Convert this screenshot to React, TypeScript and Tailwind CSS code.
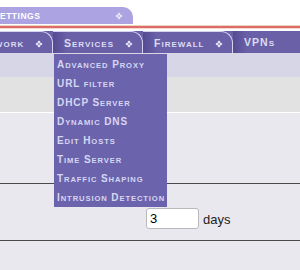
// IPCop-style nav with Services dropdown open
const Diamond = () => (
  <svg width="8" height="8" viewBox="0 0 8 8" className="shrink-0">
    <path
      d="M4 0.5L5.6 2.1 4 3.7 2.4 2.1Z M2.1 2.4L3.7 4 2.1 5.6 0.5 4Z M5.9 2.4L7.5 4 5.9 5.6 4.3 4Z M4 4.3L5.6 5.9 4 7.5 2.4 5.9Z"
      fill="#ecebf8"
    />
  </svg>
);

// hand-made small caps: capitals stay big, the rest drops a size
const SmallCaps = ({ text, small }: { text: string; small: string }) => (
  <span className="whitespace-nowrap">
    {text.split("").map((c, i) =>
      c === c.toUpperCase() ? (
        <span key={i}>{c}</span>
      ) : (
        <span key={i} className={small}>
          {c.toUpperCase()}
        </span>
      )
    )}
  </span>
);

const tabs = ["Network", "Services", "Firewall"];

const menu = [
  "Advanced Proxy",
  "URL filter",
  "DHCP Server",
  "Dynamic DNS",
  "Edit Hosts",
  "Time Server",
  "Traffic Shaping",
  "Intrusion Detection",
];

export default function App() {
  return (
    <div className="relative h-[270px] w-[300px] overflow-hidden bg-white font-['Liberation_Sans',Arial,sans-serif]">
      {/* Settings tab ------------------------------------------------ */}
      <div className="h-[25px] pt-[7px]">
        <div className="flex h-[17px] w-[133px] items-center justify-between rounded-tr-[10px] bg-[#aba3e2] pt-[1px] pr-[10px] text-[8.5px] font-bold tracking-[0.5px] text-white">
          <span>ETTINGS</span>
          <Diamond />
        </div>
      </div>
      <div className="h-[4px] bg-[linear-gradient(to_bottom,#ecd6c2_0,#ecd6c2_1px,#e06a6a_1px,#e06a6a_3px,#efdcca_3px)]" />
      <div className="h-[2px]" />

      {/* Main nav ---------------------------------------------------- */}
      <div className="flex h-[22px] bg-[#6a60a8] text-[10.5px] font-bold tracking-[1px] text-[#dcdcf2]">
        <div className="-ml-[37px] flex">
          {tabs.map((t) => (
            <div
              key={t}
              className="flex h-[22px] w-[90px] items-center justify-between rounded-tr-[12px] border-t border-r border-[#d6d2ef] bg-[linear-gradient(to_right,#554b93,#6a60a8_14px)] pt-[2px] pr-[9px] pl-[11px]"
            >
              <SmallCaps text={t} small="text-[8px]" />
              <Diamond />
            </div>
          ))}
        </div>
        <div className="flex h-[22px] flex-1 items-center bg-[linear-gradient(to_right,#554b93,#6a60a8_14px)] pt-[2px] pl-[11px]">
          <SmallCaps text="VPNs" small="text-[8px]" />
        </div>
      </div>

      {/* Page body --------------------------------------------------- */}
      <div className="h-[24px] bg-[#d6d6e6]" />
      <div className="h-[36px] border-b border-white bg-[#e2e2e2]" />
      <div className="h-[71px] border-b border-[#4a4a4a] bg-[#e9e8ee]" />
      <div className="flex h-[57px] border-b border-[#4a4a4a] bg-[#e9e8ee] pt-[24px]">
        <div className="w-[146px]" />
        <input
          defaultValue="3"
          className="h-[21px] w-[53px] rounded-[3px] border border-[#b9b9bd] bg-white px-[3px] text-[13px] text-black outline-none"
        />
        <span className="mt-[2px] ml-[4px] text-[13px] text-[#222]">days</span>
      </div>
      <div className="h-[30px] bg-[#e9e8ee]" />

      {/* Services dropdown ------------------------------------------- */}
      <div className="absolute top-[54px] left-[54px] flex w-[113px] flex-col bg-[#6b64ad] pt-[1px] text-[10px] font-bold tracking-[0.9px] text-[#d6d6f2]">
        {menu.map((m) => (
          <div key={m} className="flex h-[19px] items-center pl-[3px]">
            <SmallCaps text={m} small="text-[7.6px]" />
          </div>
        ))}
      </div>
    </div>
  );
}
